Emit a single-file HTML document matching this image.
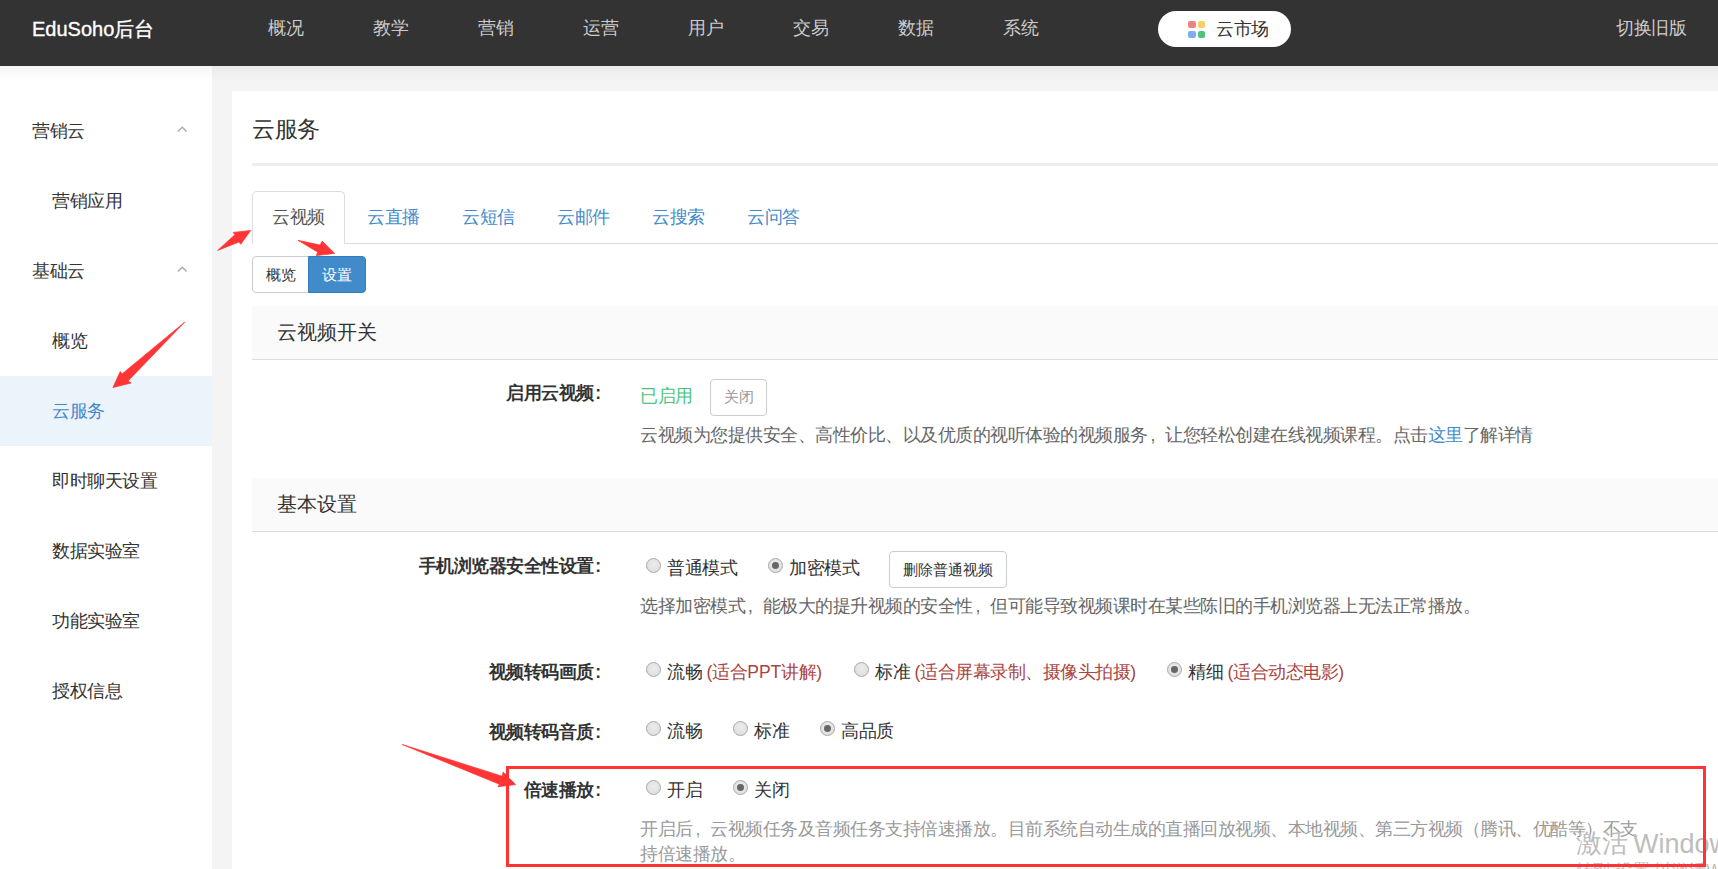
<!DOCTYPE html>
<html><head><meta charset="utf-8">
<style>
*{box-sizing:border-box;margin:0;padding:0}
html,body{width:1718px;height:869px;overflow:hidden}
body{position:relative;background:#f4f4f4;font-family:"Liberation Sans",sans-serif;color:#333}
.a{position:absolute;white-space:nowrap}
#hdr{position:absolute;left:0;top:0;width:1718px;height:66px;background:#333}
#logo{left:32px;top:17px;font-size:20px;line-height:25px;color:#fff;-webkit-text-stroke:0.35px #fff}
.nav{top:16px;font-size:17.5px;line-height:25px;letter-spacing:-0.5px;color:#ccc}
#mkt{left:1158px;top:11px;width:133px;height:36px;border-radius:18px;background:#fff}
#mkt .g{position:absolute;width:7.2px;height:7.2px;border-radius:2px}
#mkt .t{position:absolute;left:58px;top:6px;font-size:17.5px;line-height:25px;letter-spacing:-0.5px;color:#333}
#old{left:1616px;top:16px;font-size:17.5px;line-height:25px;letter-spacing:-0.5px;color:#ccc}
#side{position:absolute;left:0;top:66px;width:212px;height:803px;background:#fff}
#shade{position:absolute;left:0;top:66px;width:1718px;height:16px;background:linear-gradient(rgba(0,0,0,.04),rgba(0,0,0,0))}
.si{font-size:17.5px;line-height:25px;letter-spacing:-0.5px;color:#333}
.chev{position:absolute;width:10.5px;height:6.5px}
#act{position:absolute;left:0;top:376px;width:212px;height:70px;background:#ebf3fb}
#card{position:absolute;left:232px;top:91px;width:1500px;height:800px;background:#fff}
.tab{font-size:17.5px;line-height:25px;letter-spacing:-0.5px;color:#428bca}
.desc{font-size:17.5px;line-height:25px;letter-spacing:-0.5px;color:#666}
.lbl{font-size:17.5px;line-height:25px;letter-spacing:-0.5px;color:#333;font-weight:bold;text-align:right}
.radio{position:absolute;width:15px;height:15px;border-radius:50%;border:1px solid #a9a9a9;background:radial-gradient(circle at 50% 40%,#ececec 0,#e2e2e2 60%,#dadada 100%)}
.radio.on::after{content:"";position:absolute;left:3.1px;top:3.1px;width:6.8px;height:6.8px;border-radius:50%;background:#666}
.rt{font-size:17.5px;line-height:25px;letter-spacing:-0.5px;color:#333}
.red{color:#a94442}
.l{letter-spacing:0}
.co{letter-spacing:0;margin-left:1.5px}
.cm{display:inline-block;width:17.5px;letter-spacing:0;padding-left:3px;text-align:left}
.ph{position:absolute;left:252px;width:1466px;height:54px;background:#fafafa;border-bottom:1px solid #ddd}
.btn{position:absolute;border:1px solid #ccc;background:#fff;border-radius:4px;font-size:15px;color:#333;text-align:center}
</style></head>
<body>
<div id="hdr"></div>
<div class="a" id="logo">EduSoho后台</div>
<div class="a nav" style="left:268px">概况</div>
<div class="a nav" style="left:373px">教学</div>
<div class="a nav" style="left:478px">营销</div>
<div class="a nav" style="left:583px">运营</div>
<div class="a nav" style="left:688px">用户</div>
<div class="a nav" style="left:793px">交易</div>
<div class="a nav" style="left:898px">数据</div>
<div class="a nav" style="left:1003px">系统</div>
<div class="a" id="mkt">
  <div class="g" style="left:30.4px;top:10.2px;background:#ec8383"></div>
  <div class="g" style="left:40px;top:10.2px;background:#f6d067"></div>
  <div class="g" style="left:30.4px;top:19.8px;background:#7eaef0"></div>
  <div class="g" style="left:40px;top:19.8px;background:#4cc47d"></div>
  <div class="t">云市场</div>
</div>
<div class="a" id="old">切换旧版</div>

<div id="side"></div>
<div id="act"></div>
<div class="a si" style="left:32px;top:119px">营销云</div>
<svg class="chev" style="left:177px;top:126px" viewBox="0 0 10.5 6.5"><polyline points="0.8,5.6 5.25,1.2 9.7,5.6" fill="none" stroke="#a6acb3" stroke-width="1.4"/></svg>
<div class="a si" style="left:52px;top:189px">营销应用</div>
<div class="a si" style="left:32px;top:259px">基础云</div>
<svg class="chev" style="left:177px;top:266px" viewBox="0 0 10.5 6.5"><polyline points="0.8,5.6 5.25,1.2 9.7,5.6" fill="none" stroke="#a6acb3" stroke-width="1.4"/></svg>
<div class="a si" style="left:52px;top:329px">概览</div>
<div class="a si" style="left:52px;top:399px;color:#428bca">云服务</div>
<div class="a si" style="left:52px;top:469px">即时聊天设置</div>
<div class="a si" style="left:52px;top:539px">数据实验室</div>
<div class="a si" style="left:52px;top:609px">功能实验室</div>
<div class="a si" style="left:52px;top:679px">授权信息</div>

<div id="card"></div>
<div id="shade"></div>
<div class="a" style="left:252px;top:116px;font-size:22.5px;line-height:28px;letter-spacing:-0.5px;color:#333">云服务</div>
<div class="a" style="left:252px;top:163px;width:1466px;height:3px;background:#eee"></div>

<!-- tabs -->
<div class="a" style="left:252px;top:243px;width:1466px;height:1px;background:#ddd"></div>
<div class="a" style="left:252px;top:191px;width:93px;height:53px;border:1px solid #ddd;border-bottom:none;border-radius:5px 5px 0 0;background:#fff"></div>
<div class="a tab" style="left:272px;top:205px;color:#555">云视频</div>
<div class="a tab" style="left:367px;top:205px">云直播</div>
<div class="a tab" style="left:462px;top:205px">云短信</div>
<div class="a tab" style="left:557px;top:205px">云邮件</div>
<div class="a tab" style="left:652px;top:205px">云搜索</div>
<div class="a tab" style="left:747px;top:205px">云问答</div>

<!-- btn group -->
<div class="btn" style="left:252px;top:256px;width:57px;height:37px;border-radius:4px 0 0 4px;line-height:35px">概览</div>
<div class="btn" style="left:308px;top:256px;width:58px;height:37px;border-radius:0 4px 4px 0;line-height:35px;background:#428bca;border-color:#357ebd;color:#fff">设置</div>

<!-- heading 1 -->
<div class="ph" style="top:306px"></div>
<div class="a" style="left:277px;top:320px;font-size:20px;line-height:25px;color:#333">云视频开关</div>

<div class="a lbl" style="left:301px;width:300px;top:381px">启用云视频<span class="co">:</span></div>
<div class="a rt" style="left:640px;top:384px;color:#4cc47d">已启用</div>
<div class="btn" style="left:710px;top:379px;width:57px;height:37px;line-height:33px;color:#999">关闭</div>
<div class="a desc" style="left:640px;top:423px">云视频为您提供安全、高性价比、以及优质的视听体验的视频服务<span class="cm">,</span>让您轻松创建在线视频课程。点击<span style="color:#428bca">这里</span>了解详情</div>

<!-- heading 2 -->
<div class="ph" style="top:478px"></div>
<div class="a" style="left:277px;top:492px;font-size:20px;line-height:25px;color:#333">基本设置</div>

<div class="a lbl" style="left:301px;width:300px;top:554px">手机浏览器安全性设置<span class="co">:</span></div>
<div class="radio" style="left:646px;top:558px"></div>
<div class="a rt" style="left:667px;top:556px">普通模式</div>
<div class="radio on" style="left:768px;top:558px"></div>
<div class="a rt" style="left:789px;top:556px">加密模式</div>
<div class="btn" style="left:889px;top:551px;width:118px;height:37px;line-height:35px">删除普通视频</div>
<div class="a desc" style="left:640px;top:594px">选择加密模式<span class="cm">,</span>能极大的提升视频的安全性<span class="cm">,</span>但可能导致视频课时在某些陈旧的手机浏览器上无法正常播放。</div>

<div class="a lbl" style="left:301px;width:300px;top:660px">视频转码画质<span class="co">:</span></div>
<div class="radio" style="left:646px;top:662px"></div>
<div class="a rt" style="left:667px;top:660px">流畅 <span class="red"><span class="l">(</span>适合<span class="l">PPT</span>讲解<span class="l">)</span></span></div>
<div class="radio" style="left:854px;top:662px"></div>
<div class="a rt" style="left:875px;top:660px">标准 <span class="red"><span class="l">(</span>适合屏幕录制、摄像头拍摄<span class="l">)</span></span></div>
<div class="radio on" style="left:1167px;top:662px"></div>
<div class="a rt" style="left:1188px;top:660px">精细 <span class="red"><span class="l">(</span>适合动态电影<span class="l">)</span></span></div>

<div class="a lbl" style="left:301px;width:300px;top:720px">视频转码音质<span class="co">:</span></div>
<div class="radio" style="left:646px;top:721px"></div>
<div class="a rt" style="left:667px;top:719px">流畅</div>
<div class="radio" style="left:733px;top:721px"></div>
<div class="a rt" style="left:754px;top:719px">标准</div>
<div class="radio on" style="left:820px;top:721px"></div>
<div class="a rt" style="left:841px;top:719px">高品质</div>

<div class="a lbl" style="left:301px;width:300px;top:778px">倍速播放<span class="co">:</span></div>
<div class="radio" style="left:646px;top:780px"></div>
<div class="a rt" style="left:667px;top:778px">开启</div>
<div class="radio on" style="left:733px;top:780px"></div>
<div class="a rt" style="left:754px;top:778px">关闭</div>
<div class="a desc" style="left:640px;top:817px;color:#999;white-space:normal;width:1004px">开启后<span class="cm">,</span>云视频任务及音频任务支持倍速播放。目前系统自动生成的直播回放视频、本地视频、第三方视频（腾讯、优酷等）不支持倍速播放。</div>

<!-- watermark -->
<div class="a" style="left:1576px;top:826px;font-size:26px;line-height:34px;color:#bdbdbd">激活</div><div class="a" style="left:1633px;top:827px;font-size:27px;line-height:34px;color:#bdbdbd">Windows</div>
<div class="a" style="left:1576px;top:860px;font-size:17px;line-height:22px;color:#bdbdbd">转到“设置”以激活Windows。</div>
<!-- annotations -->
<div class="a" style="left:506px;top:766px;width:1200px;height:101px;border:3px solid #ff3333"></div>
<svg class="a" style="left:0;top:0" width="1718" height="869" viewBox="0 0 1718 869">
  <polygon fill="#ff3434" stroke="#ff3434" stroke-width="0.7" stroke-linejoin="round" points="184.9,321.9 128,381 131.1,383 112.9,387.6 120.2,371.6 122.3,373.7"/>
  <polygon fill="#ff3434" stroke="#ff3434" stroke-width="0.7" stroke-linejoin="round" points="217.6,250.4 234.9,234.7 233,232.4 250.7,230.4 240.8,244.2 238.8,242.1"/>
  <polygon fill="#ff3434" stroke="#ff3434" stroke-width="0.7" stroke-linejoin="round" points="298,240.3 320,245.1 322.2,241.1 334.7,253.4 316.2,255.6 317.8,252.2"/>
  <polygon fill="#ff3434" stroke="#ff3434" stroke-width="0.7" stroke-linejoin="round" points="402.2,744.5 502.1,776.2 503.2,772.1 515.7,784.6 497.9,786.8 499.4,784.2"/>
</svg>

</body></html>
